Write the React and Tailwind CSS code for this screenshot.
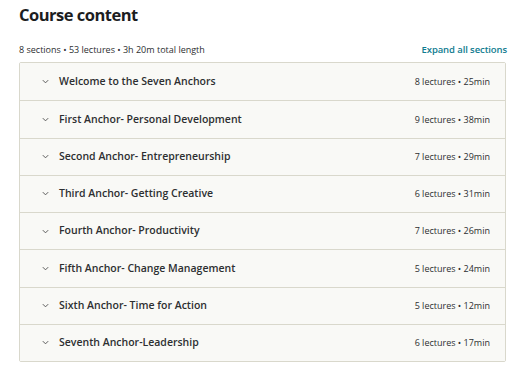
import React from 'react';

const sections = [
  { title: 'Welcome to the Seven Anchors', lectures: 8, length: '25min' },
  { title: 'First Anchor- Personal Development', lectures: 9, length: '38min' },
  { title: 'Second Anchor- Entrepreneurship', lectures: 7, length: '29min' },
  { title: 'Third Anchor- Getting Creative', lectures: 6, length: '31min' },
  { title: 'Fourth Anchor- Productivity', lectures: 7, length: '26min' },
  { title: 'Fifth Anchor- Change Management', lectures: 5, length: '24min' },
  { title: 'Sixth Anchor- Time for Action', lectures: 5, length: '12min' },
  { title: 'Seventh Anchor-Leadership', lectures: 6, length: '17min' },
];

const Chevron = () => (
  <svg width="9" height="9" viewBox="0 0 10 10" className="shrink-0">
    <path d="M2 3.5 L5 6.5 L8 3.5" fill="none" stroke="#5a5a5a" strokeWidth="1.1" />
  </svg>
);

const App = () => {
  return (
    <div
      className="w-[520px] h-[378px] bg-white pl-[19px] pr-[13px] pt-[3px] text-[#1c1d1f]"
      style={{ fontFamily: '"Open Sans", "Noto Sans", sans-serif' }}
    >
      <h1 className="text-[16.5px] font-bold leading-[24px] tracking-[-0.5px]">Course content</h1>

      <div className="flex items-end justify-between mt-[16px] mb-[5px]">
        <span className="text-[9px] leading-[14px] text-[#2d2f31]">
          8 sections • 53 lectures • 3h 20m total length
        </span>
        <span className="text-[9.5px] font-semibold leading-[14px] text-[#0f7c90] tracking-[-0.1px]">
          Expand all sections
        </span>
      </div>

      {/* Section list */}
      <div className="border border-[#d9d8cc] rounded-[2px] mr-[1px]">
        {sections.map((s, idx) => (
          <div
            key={idx}
            className={`flex items-center h-[37.25px] bg-[#f9f9f6] pl-[21px] pr-[15px] ${idx > 0 ? 'border-t border-[#d9d8cc]' : ''}`}
          >
            <Chevron />
            <span className="ml-[9px] text-[10.5px] font-semibold text-[#2d2f31]">{s.title}</span>
            <span className="ml-auto text-[9px] text-[#2d2f31]">
              {s.lectures} lectures • {s.length}
            </span>
          </div>
        ))}
      </div>
    </div>
  );
};

export default App;
